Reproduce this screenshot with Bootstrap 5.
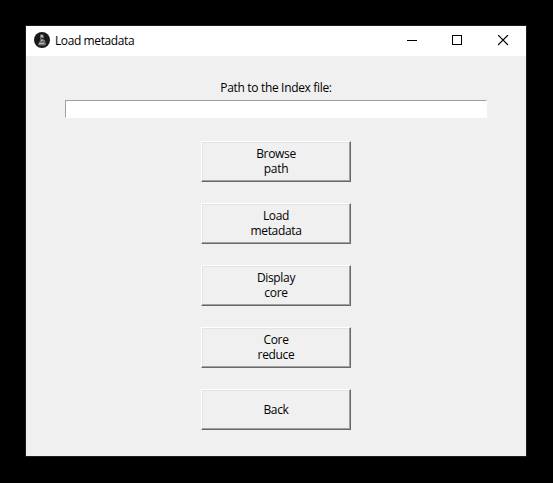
<!DOCTYPE html>
<html lang="en">
<head>
<meta charset="utf-8">
<title>Load metadata</title>
<link rel="stylesheet" href="https://cdn.jsdelivr.net/npm/bootstrap@5.3.0/dist/css/bootstrap.min.css">
<style>
body{background:#000;font:12px/15px "Open Sans","Noto Sans",sans-serif;color:#000;padding:25px;letter-spacing:-.33px}
.win{width:502px;height:432px;border:1px solid #1c1c1c;background:#f0f0f0}
.titlebar{height:30px;background:#fff;padding-left:8px}
.app-icon{width:16px;height:16px;margin:0 5px 2px 0}
.app-title{padding-bottom:1px;letter-spacing:-.4px}
.ctl{width:46px;height:30px;padding:9px 0 0 18px;border:0;background:none;display:flex;align-items:flex-start}
.path-label{margin-top:24px;height:15px;margin-bottom:5px}
.path-input{width:422px;height:18px;border:1px solid;border-color:#a0a0a0 #fff #fff #a0a0a0;border-radius:0;background:#fff;padding:0 2px;margin-left:39px}
.actions{gap:21px;margin-top:23px}
.tk-btn{width:150px;height:41px;padding:0 0 1px;border:1px solid;border-color:#fff #696969 #696969 #fff;box-shadow:inset -1px -1px #a0a0a0,inset 1px 1px #e3e3e3;background:#f0f0f0;color:#000;line-height:15px;letter-spacing:inherit}
.tk-btn.one-line{padding:0}
</style>
<script src="https://cdn.jsdelivr.net/npm/bootstrap@5.3.0/dist/js/bootstrap.bundle.min.js"></script>
</head>
<body class="overflow-hidden">
<main class="win">
  <header class="titlebar d-flex align-items-center">
    <svg class="app-icon" viewBox="0 0 16 16"><circle cx="8" cy="8" r="8" fill="#17191a"/><path d="M6 2.500h3l1 2-.5 3 1.500 1 1 4-1 1H5l-1-1 1-2 1.500-2.500L6 6z" fill="#777"/><path d="M7 3h2v2H7zM7 8h2v1H7zM5 11h5v1H5z" fill="#b5b5b5"/><path d="M7 6h3v1H7zM8 9h1v1H8z" fill="#343434"/><path d="M6 5h1v1H6z" fill="#a44"/></svg>
    <span class="app-title me-auto">Load metadata</span>
    <button class="ctl" aria-label="Minimize"><svg width="12" height="12"><path d="M1 5.500h10" stroke="#000" shape-rendering="crispEdges"/></svg></button>
    <button class="ctl" aria-label="Maximize"><svg width="12" height="12"><path d="M.5.5h9v9h-9z" fill="none" stroke="#000" shape-rendering="crispEdges"/></svg></button>
    <button class="ctl" aria-label="Close"><svg width="12" height="12"><path d="M0 0l10 10m0-10l-10 10" stroke="#000" stroke-width="1.150"/></svg></button>
  </header>
  <label class="path-label d-block text-center" for="path">Path to the Index file:</label>
  <input class="path-input d-block" id="path" type="text">
  <div class="actions d-flex flex-column align-items-center">
    <button class="tk-btn">Browse<br>path</button>
    <button class="tk-btn">Load<br>metadata</button>
    <button class="tk-btn">Display<br>core</button>
    <button class="tk-btn">Core<br>reduce</button>
    <button class="tk-btn one-line">Back</button>
  </div>
</main>
</body>
</html>
